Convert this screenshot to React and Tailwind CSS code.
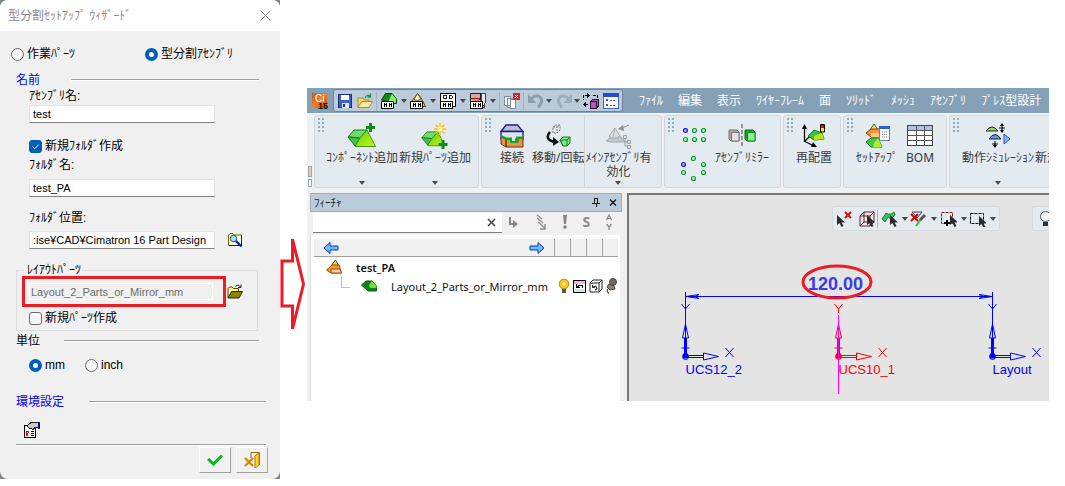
import React from "react";

const JP = "font-['Liberation_Sans','Noto_Sans_CJK_JP',sans-serif]";
const UI = "font-['Noto_Sans','Noto_Sans_CJK_JP',sans-serif]";

function Icon({ w = 16, h = 16, crisp = false, className = "", children }) {
  return (
    <svg
      width={w}
      height={h}
      viewBox={`0 0 ${w} ${h}`}
      shapeRendering={crisp ? "crispEdges" : "auto"}
      fill="none"
      aria-hidden="true"
      className={`shrink-0 ${className}`}
    >
      {children}
    </svg>
  );
}

const Caret = ({ className = "" }) => (
  <Icon w={6} h={4} className={className}>
    <path d="M0 0H6L3 4Z" fill="#4a4a4a" />
  </Icon>
);

/* ---------- Wizard dialog ---------- */

const radioClass =
  "m-0 size-[13px] shrink-0 appearance-none rounded-full border border-[#6b6b6b] bg-[#f6f6f6] checked:border-4 checked:border-[#005fb8] checked:bg-white";

function Radio({ name, label, checked, className = "" }) {
  return (
    <label className={`flex items-center gap-[3px] whitespace-nowrap ${className}`}>
      <input type="radio" name={name} defaultChecked={checked} className={radioClass} />
      {label}
    </label>
  );
}

function Check({ label, checked }) {
  return (
    <label className="flex h-4 items-center gap-[3px] whitespace-nowrap">
      <span className="grid">
        <input
          type="checkbox"
          defaultChecked={checked}
          className="m-0 size-[13px] appearance-none rounded-[3px] border border-[#6b6b6b] bg-[#f6f6f6] [grid-area:1/1] checked:border-[#005fb8] checked:bg-[#005fb8]"
        />
        {checked && (
          <Icon w={13} h={13} className="pointer-events-none [grid-area:1/1]">
            <path d="M3.5 6.5L5.7 8.7L9.7 4.7" stroke="#fff" strokeWidth="1" />
          </Icon>
        )}
      </span>
      {label}
    </label>
  );
}

function Section({ title, gap, blue, className = "" }) {
  return (
    <div className={`flex h-4 items-center ${gap} ${className}`}>
      <h2 className={blue ? "text-[#0000ff]" : ""}>{title}</h2>
      <span className="h-[2px] flex-1 border-t border-b border-t-[#a0a0a0] border-b-white" />
    </div>
  );
}

const fieldClass =
  "h-[18px] w-[186px] min-w-0 border border-[#e3e3e3] border-b-[#808080] bg-white px-[3px] text-[11px] text-black outline-none";

function Wizard() {
  return (
    <div className="w-[280px] shrink-0 bg-[#86848c]">
      <form className={`rounded-lg bg-[#f0f0f0] text-xs leading-4 text-black ${JP}`}>
        <header className="flex h-[31px] items-center justify-between rounded-t-lg bg-white pr-[9px] pl-2 text-[#8a8a8a]">
          <h1>型分割ｾｯﾄｱｯﾌﾟ ｳｨｻﾞｰﾄﾞ</h1>
          <button type="button" aria-label="閉じる">
            <Icon w={11} h={11}>
              <path d="M.5 .5L10.5 10.5M10.5 .5L.5 10.5" stroke="#808080" />
            </Icon>
          </button>
        </header>

        <div className="flex flex-col pt-[15px] pr-[14px] pb-1.5 pl-4">
          <div className="-ml-[5px] flex h-4">
            <Radio name="mode" label="作業ﾊﾟｰﾂ" className="w-[134px]" />
            <Radio name="mode" label="型分割ｱｾﾝﾌﾞﾘ" checked />
          </div>

          <Section title="名前" gap="gap-[31px]" blue className="mt-[10px] pr-[7px]" />
          <div className="flex flex-col pl-[13px]">
            <label htmlFor="asm">ｱｾﾝﾌﾞﾘ名:</label>
            <input id="asm" defaultValue="test" className={`mt-px ${fieldClass}`} />
            <div className="mt-[15px]">
              <Check label="新規ﾌｫﾙﾀﾞ作成" checked />
            </div>
            <label htmlFor="folder" className="mt-[3px]">ﾌｫﾙﾀﾞ名:</label>
            <input id="folder" defaultValue="test_PA" className={`mt-1.5 ${fieldClass}`} />
            <label htmlFor="path" className="mt-[13px]">ﾌｫﾙﾀﾞ位置:</label>
            <div className="mt-[5px] flex items-center gap-3">
              <input id="path" defaultValue=":ise¥CAD¥Cimatron 16 Part Design" className={fieldClass} />
              <button type="button" aria-label="参照">
                <Icon>
                  <path d="M1.5 13.5V3L3 1.5H6L7.5 3H14.5V13.5Z" fill="#fffbe0" stroke="#6b6500" />
                  <path d="M14.5 3V13.5H2" stroke="#222" />
                  <circle cx="6.5" cy="6.5" r="3.2" fill="#8fe8ee" stroke="#444" />
                  <path d="M9 9L14.5 14.5" stroke="#0026a8" strokeWidth="2.4" />
                </Icon>
              </button>
            </div>
          </div>

          <fieldset className="mt-[13px] mr-2 border border-[#dcdcdc] px-3 pb-1">
            <legend className="-ml-1 h-4 px-0.5">ﾚｲｱｳﾄﾊﾟｰﾂ</legend>
            <div className="mt-[5px] flex h-[17px] items-center justify-between">
              <div className="relative flex">
                <input
                  aria-label="ﾚｲｱｳﾄﾊﾟｰﾂ"
                  disabled
                  defaultValue="Layout_2_Parts_or_Mirror_mm"
                  className="h-[17px] w-[184px] border border-white bg-[#f0f0f0] px-px text-[11px] text-[#6d6d6d]"
                />
                <span className="pointer-events-none absolute -top-[7px] -right-[13px] -bottom-[7px] -left-[7px] border-3 border-[#ed1c24]" />
              </div>
              <button type="button" aria-label="開く" className="mr-0.5">
                <Icon>
                  <path d="M1 13.5V4.5L2.5 3H5L6.5 4.5H11.5V7.5" fill="#fff68a" stroke="#4b4600" />
                  <path d="M1 14L4.5 7.5H15.5L12 14Z" fill="#8a8300" stroke="#2c2900" />
                  <path d="M8.5 2.5Q11 -.5 13.5 3M14 .5V3.5H11" stroke="#222" />
                </Icon>
              </button>
            </div>
            <div className="mt-[10px]">
              <Check label="新規ﾊﾟｰﾂ作成" />
            </div>
          </fieldset>

          <Section title="単位" gap="gap-6" className="mt-0.5 pr-[7px]" />
          <div className="mt-2 flex h-4 pl-[13px]">
            <Radio name="unit" label="mm" checked className="w-14" />
            <Radio name="unit" label="inch" />
          </div>

          <Section title="環境設定" gap="gap-[25px]" blue className="mt-[21px]" />
          <button type="button" aria-label="環境設定" className="mt-3 ml-2 w-4">
            <Icon crisp>
              <path d="M.5 3.5H11.5V15.5H.5Z" fill="#fff" stroke="#000" />
              <path d="M3 4L7 .5H14V5.500H11L9 7.500L5 6Z" fill="#c8c8c8" stroke="#222" />
              <path d="M14 0H16V7H14Z" fill="#000080" />
              <path d="M2 9H5V11H4V14H2Z" fill="#e00000" />
              <path d="M3 10H4V11H3Z" fill="#fff" />
              <path d="M7 9.500H10M7 11.500H10M7 13.500H10" stroke="#000" />
            </Icon>
          </button>
          <hr className="mt-[6px] h-[2px] border-t border-b border-t-[#a0a0a0] border-b-white" />
          <div className="mt-px mr-[-2px] flex justify-end gap-[5px]">
            <button
              type="submit"
              aria-label="OK"
              className="flex h-[26px] w-8 items-center justify-center border border-white border-r-[#a0a0a0] border-b-[#a0a0a0]"
            >
              <Icon w={16} h={12}>
                <path d="M1 5L6.500 10L15 1.500" stroke="#08b814" strokeWidth="3" />
              </Icon>
            </button>
            <button
              type="button"
              aria-label="終了"
              className="flex h-[26px] w-8 items-center justify-center border border-white border-r-[#a0a0a0] border-b-[#a0a0a0]"
            >
              <Icon>
                <path d="M7 6V.5H15.5V13" stroke="#a86500" />
                <path d="M15 1V13L11 16V4Z" fill="#ffd426" stroke="#b87800" />
                <path d="M1 6L9 14M9 6L1 14" stroke="#d88a00" strokeWidth="2.4" />
              </Icon>
            </button>
          </div>
        </div>
      </form>
    </div>
  );
}

/* ---------- Quick access toolbar ---------- */

const Plate = () => (
  <>
    <path d="M.5 8.5H12.5V15.5H.5Z" fill="#fff" stroke="#000" />
    <path d="M3.5 10V14M5.5 10V14M4 11.5H5M8.5 10V14M10.5 10V14M9 11.5H10" stroke="#000" />
  </>
);

function QuickBar() {
  const Sep = () => <span className="h-[18px] w-px bg-[#a4b3c1]" />;
  return (
    <div className="flex h-[23px] w-[290px] shrink-0 items-center justify-between rounded-[3px] border border-[#6e8496] bg-[#bccbd9] px-[3px]">
      <button type="button" aria-label="保存">
        <Icon crisp>
          <path d="M1.5 1.5H14.5V14.5H1.5Z" fill="#3f62c9" stroke="#1c2f86" />
          <path d="M4 2H12V7H4Z" fill="#fff" />
          <path d="M5 10H12V15H5Z" fill="#dfe6f5" />
          <path d="M6 11H8V14H6Z" fill="#1c2f86" />
        </Icon>
      </button>
      <button type="button" aria-label="開く">
        <Icon>
          <path d="M1 14V5H6L7 7H12V9" fill="#f8d878" stroke="#b88820" />
          <path d="M1 14.5L4.5 8.5H15.5L12 14.5Z" fill="#fdeaa0" stroke="#b88820" />
          <path d="M8 5Q10 1 13.5 3M13.5 .5V4H10.5" stroke="#1f9b2d" strokeWidth="1.3" />
        </Icon>
      </button>
      <Sep />
      <button type="button" aria-label="アセンブリ" className="flex items-center gap-1">
        <Icon>
          <path d="M.5 7L4.5 .5H11L15.5 6V10.500H9Z" fill="#0d8a1a" stroke="#05400a" />
          <path d="M8 7L11 1L15 6V10H8Z" fill="#8af05e" />
          <Plate />
        </Icon>
        <Caret />
      </button>
      <button type="button" aria-label="パーツ" className="flex items-center gap-1">
        <Icon>
          <path d="M.5 10L7.500 .5L11 5L15.500 13.500H10Z" fill="#ffb84c" stroke="#7a3c00" />
          <path d="M7.500 .5L11 6L7 8L4 6Z" fill="#f6f4a8" stroke="#555" />
          <Plate />
        </Icon>
        <Caret />
      </button>
      <button type="button" aria-label="図面" className="flex items-center gap-1">
        <Icon crisp>
          <path d="M.5 .5H15.5V13.5H.5Z" fill="#fff" stroke="#000" />
          <path d="M3.500 2.500H6.500V5.500H3.500ZM9.500 2.500H11.500L12.500 4L11.500 5.500H9.500Z" stroke="#222" />
          <Plate />
        </Icon>
        <Caret />
      </button>
      <button type="button" aria-label="加工" className="flex items-center gap-1">
        <Icon crisp>
          <path d="M.5 .5H10.500V9H.5Z" fill="#d8a49c" stroke="#222" />
          <path d="M1 5H9L14 12V14H10" fill="#e88" stroke="#8d1e14" />
          <path d="M11.500 .5H15.500V9L14 12H11.500Z" fill="#e9eef2" stroke="#444" />
          <Plate />
        </Icon>
        <Caret />
      </button>
      <Sep />
      <button type="button" aria-label="閉じる">
        <Icon crisp>
          <path d="M.5 3.5H6.5V12.5H.5ZM3.5 5.5H9.5V14.5H3.5Z" fill="#eef3f8" stroke="#7f8fa0" />
          <path d="M6 6H12V16H6Z" fill="#fff" />
          <path d="M6.5 6.5H11.5V15.5H6.5Z" stroke="#7f8fa0" />
          <path d="M9 0H16V7H9Z" fill="#ee1c1c" />
          <path d="M11 2L14 5M14 2L11 5" stroke="#fff" />
        </Icon>
      </button>
      <Sep />
      <button type="button" aria-label="元に戻す" className="flex items-center gap-0.5">
        <Icon>
          <path d="M3.500 5.500Q8 1 12 4Q16 8.500 10 14.500" stroke="#8e9cab" strokeWidth="3" />
          <path d="M0 1V10H8.500Z" fill="#8e9cab" />
        </Icon>
        <Caret />
      </button>
      <button type="button" aria-label="やり直し" className="flex items-center gap-0.5">
        <Icon>
          <path d="M12.500 5.500Q8 1 4 4Q0 8.500 6 14.500" stroke="#a0adba" strokeWidth="3" />
          <path d="M16 1V10H7.500Z" fill="#a0adba" />
        </Icon>
        <Caret />
      </button>
      <button type="button" aria-label="切替">
        <Icon crisp>
          <path d="M5 2.500H.5V7M2 11.500H6M10 2.500H14.500V5" stroke="#000" strokeDasharray="3 1" />
          <path d="M4 0V5L7 2.500ZM3 9V14L0 11.500Z" fill="#000" />
          <path d="M7.500 8.500L9.500 6.500H15.500V13L13.500 15.500H7.500Z" fill="#a861b0" stroke="#2f0a35" />
          <path d="M8 8.500H13.500V15" stroke="#2f0a35" />
        </Icon>
      </button>
      <button type="button" aria-label="一覧">
        <Icon crisp>
          <path d="M.5 .5H15.5V15.5H.5Z" fill="#fff" stroke="#4a6cb8" />
          <path d="M0 0H16V4H0Z" fill="#2448d8" />
          <path d="M3 6H5V8H3ZM3 11H5V13H3Z" fill="#3458d8" />
          <path d="M7 7.500H13M7 12.500H13" stroke="#555" strokeDasharray="2 1" />
        </Icon>
      </button>
    </div>
  );
}

const MENUS = ["ﾌｧｲﾙ", "編集", "表示", "ﾜｲﾔｰﾌﾚｰﾑ", "面", "ｿﾘｯﾄﾞ", "ﾒｯｼｭ", "ｱｾﾝﾌﾞﾘ", "ﾌﾟﾚｽ型設計"];

function MenuBar() {
  return (
    <div className="flex h-[25px] items-center overflow-hidden bg-[#85a1b7]">
      <span className="ml-[5px] flex h-4 w-[21px] shrink-0">
        <svg width="18" height="18" viewBox="0 0 18 18" aria-hidden="true">
          <defs>
            <linearGradient id="logo" x1="0" y1="0" x2="1" y2="1">
              <stop offset="0" stopColor="#c9591e" />
              <stop offset=".5" stopColor="#f08024" />
              <stop offset="1" stopColor="#b5410f" />
            </linearGradient>
          </defs>
          <path d="M0 0H15V15H0Z" fill="url(#logo)" />
          <text x="3" y="9" fontSize="10" fill="#fff" fontFamily="Liberation Sans, sans-serif">Ci</text>
          <text x="6" y="16" fontSize="9" fontWeight="700" fill="#111" fontFamily="Liberation Sans, sans-serif">15</text>
        </svg>
      </span>
      <QuickBar />
      <nav className="ml-4 flex shrink-0 gap-[15px] text-xs leading-4 text-white">
        {MENUS.map((m) => (
          <button key={m} type="button" className="shrink-0 whitespace-nowrap">{m}</button>
        ))}
      </nav>
    </div>
  );
}

/* ---------- Ribbon ---------- */

const Grip = () => (
  <Icon w={8} h={16} crisp className="mt-[2px] ml-[2px]">
    {[0, 4, 8, 12].map((y) => (
      <path key={y} d={`M1 ${y}h2v2h-2zM5 ${y}h2v2h-2z`} fill="#8eabbf" />
    ))}
  </Icon>
);

function Group({ className = "", children }) {
  return (
    <div className={`flex h-[73px] rounded-[3px] border border-[#d2d6da] bg-[#e3eaf0] ${className}`}>
      <Grip />
      {children}
    </div>
  );
}

function Tool({ label, icon, caret, className = "" }) {
  return (
    <button type="button" className={`flex shrink-0 flex-col items-center whitespace-nowrap ${className}`}>
      <span className="mt-1 flex h-[31px] items-center justify-center">{icon}</span>
      {[].concat(label).map((line) => (
        <span key={line} className="block text-xs leading-[14px] text-[#3a3a3a]">{line}</span>
      ))}
      {caret && <Caret className="mt-auto mb-[2px]" />}
    </button>
  );
}

const Block = () => (
  <>
    <path d="M1 14L7 7H20L13 15Z" fill="#6fdc6a" stroke="#167a1c" />
    <path d="M1 14L13 15L8 23Z" fill="#46bd4e" stroke="#167a1c" />
    <path d="M13 15L20 7L28.500 23.500H8Z" fill="url(#lime)" stroke="#3f9416" />
  </>
);

const AddPart = (
  <Icon w={30} h={26}>
    <defs>
      <linearGradient id="lime" x1="0" y1="0" x2="1" y2="1">
        <stop offset="0" stopColor="#5cc81e" />
        <stop offset="1" stopColor="#c9fa10" />
      </linearGradient>
    </defs>
    <Block />
    <path d="M23.500 0V9M19 4.500H28" stroke="#128a1c" strokeWidth="3" />
  </Icon>
);
const NewPart = (
  <Icon w={30} h={26}>
    <g transform="translate(1 3) scale(.84)"><Block /></g>
    <path d="M20 0V12M14 6H26M15.500 1.500L24.500 10.500M24.500 1.500L15.500 10.500" stroke="#f5c400" strokeWidth="1.4" />
    <circle cx="20" cy="6" r="2.500" fill="#fff79a" />
    <path d="M23 17V26M18.500 21.500H27.500" stroke="#128a1c" strokeWidth="3" />
  </Icon>
);
const Connect = (
  <Icon w={24} h={24}>
    <path d="M1 7.500L6 1H17.500L23 7.500Z" fill="#b9bfcc" stroke="#1b1b98" strokeWidth="1.300" />
    <path d="M1 7.500H23V15H16V19H9V15H1Z" fill="#dfe5f0" stroke="#1b1b98" strokeWidth="1.300" />
    <path d="M1 13V20L6 23V15ZM6 15V23H23V14H18V18H11V15Z" fill="#e8924a" stroke="#68340c" />
    <path d="M1 12L6 14.500H11V18H17V13.500H23" stroke="#05b020" strokeWidth="2" />
  </Icon>
);
const Move = (
  <Icon w={26} h={24}>
    <path d="M8 3L11 1H15V6L12 9H8ZM8 3H12V9M12 3L15 1" stroke="#777" strokeDasharray="2 1" />
    <path d="M5 8Q-1 15 9 18" stroke="#111" strokeWidth="2.600" />
    <path d="M8 13V22L14 18Z" fill="#111" />
    <path d="M15 16L18 13H25V19L22 22H18Z" fill="#7bec84" stroke="#177b25" />
    <path d="M15 16H22V22M22 16L25 13M15 16L18 22" stroke="#177b25" />
  </Icon>
);
const MainAsm = (
  <Icon w={26} h={26}>
    <path d="M1 18L6 14H16L20 19H6Z" fill="#c4c8cc" stroke="#a3a8ad" />
    <path d="M4 13L10 5L15 13L12 15H6Z" fill="#dadde0" stroke="#a3a8ad" />
    <path d="M10 5L8 14" stroke="#aeb3b8" />
    <path d="M24 2L17 5" stroke="#8b9095" />
    <path d="M18 2L13 6L19 8Z" fill="#8b9095" />
    <path d="M20 16V23H23M20 19H23M18.500 12.500H21.500V15.500H18.500ZM22.500 17.500H25.500V20.500H22.500ZM22.500 22.500H25.500V25.500H22.500Z" stroke="#999ea3" />
  </Icon>
);
const Mirror = (
  <Icon w={28} h={24}>
    <path d="M1 6H9L11 8V17H3L1 15Z" fill="#aaa6aa" stroke="#77727a" />
    <path d="M3.500 8.500H11V17H3.500Z" fill="#e3dfe4" stroke="#77727a" />
    <path d="M14 0V24" stroke="#444" strokeDasharray="4 2" />
    <path d="M17 6H25L27 8V17H19L17 15Z" fill="#18a32a" stroke="#086d18" />
    <path d="M19.500 8.500H27V17H19.500Z" fill="#8cf18c" stroke="#0a8a20" />
  </Icon>
);
const Relocate = (
  <Icon w={24} h={24}>
    <path d="M2.500 17V3M2 17L12 22M3 17L8 12" stroke="#000" strokeWidth="1.300" />
    <path d="M0 5L2.500 0L5 5ZM15 23L9 23L11 18Z" fill="#000" />
    <path d="M6 12L12 6L20 9L22 15L12 16Z" fill="#3fc23f" stroke="#167a1c" />
    <path d="M12 12L20 9L22 15L12 16Z" fill="#b7e613" />
    <path d="M18.500 .5H22.500V8H18.500Z" fill="#ffe600" stroke="#000" />
    <path d="M19 1H22V4H19Z" fill="#f00000" />
  </Icon>
);
const Setup = (
  <Icon w={25} h={26}>
    <path d="M5 7L9 1L13 7Z" fill="#eef080" stroke="#4a4a10" />
    <path d="M1 10L6 6H15V14H6Z" fill="#f0943c" stroke="#8a3c00" />
    <path d="M6 10H15V14H6Z" fill="#ffc580" />
    <path d="M1 19L6 15H13L17 24H6Z" fill="#48c848" stroke="#157520" />
    <path d="M9 20L13 15L17 24H8Z" fill="#b2ee30" />
    <path d="M14.500 3.500H24.500V17.500H14.500Z" fill="#fff" stroke="#6680a8" />
    <path d="M14 3H25V6H14Z" fill="#2b5fd8" />
    <path d="M17 9H22M17 11.500H22M17 14H22" stroke="#777" strokeDasharray="1 1" />
  </Icon>
);
const Bom = (
  <Icon w={26} h={22} crisp>
    <path d="M.5 .5H25.500V20.500H.5Z" fill="#fff" stroke="#444" />
    <path d="M1 1H25V5H1Z" fill="#a9c2f2" />
    <path d="M.5 5.500H25.500M.5 10.500H25.500M.5 15.500H25.500M9.500 0V21M17.500 0V21" stroke="#555" />
  </Icon>
);
const Simulate = (
  <Icon w={26} h={26}>
    <path d="M1 8Q7 0 13 8Z" fill="#8de05e" stroke="#222" />
    <path d="M4 16Q10 7 16 16Z" fill="#5a9cf2" stroke="#222" />
    <path d="M17 1V9M14 5H20M10 18V24M7 21H13" stroke="#000" />
    <path d="M15 3L17 0L19 3M15 7L17 10L19 7M8 22L10 25L12 22" fill="#000" />
    <path d="M19 11V21L25 16Z" fill="#86b8ff" stroke="#2450d8" />
  </Icon>
);

const GRID = [[2, 2], [11, 2], [20, 2], [2, 11], [11, 11], [20, 11]];
const RING = [[10, 2], [20, 8], [20, 16], [10, 22], [0, 16], [0, 8]];

function Dots({ points, blue, h }) {
  return (
    <Icon w={26} h={h}>
      {points.map(([x, y], i) => (
        <circle
          key={i}
          cx={x + 2.5}
          cy={y + 0.5}
          r="2"
          fill={i === blue ? "#a9a9ff" : "#b5ffc0"}
          stroke={i === blue ? "#1616d0" : "#089a28"}
          strokeWidth="1.2"
        />
      ))}
    </Icon>
  );
}

function Ribbon() {
  return (
    <div className="flex h-[78px] gap-0.5 overflow-hidden bg-[#eff2f4] pt-[2px]">
      <div className="flex w-[5px] shrink-0 flex-col gap-0.5 pt-[51px] pl-px">
        <span className="h-[11px] border border-[#8eabbf] bg-[#ffc980]" />
        <span className="h-2 border border-[#8eabbf] bg-white" />
      </div>
      <Group className="w-[165px] shrink-0">
        <Tool label="ｺﾝﾎﾟｰﾈﾝﾄ追加" icon={AddPart} caret className="ml-px" />
        <Tool label="新規ﾊﾟｰﾂ追加" icon={NewPart} caret className="ml-px" />
      </Group>
      <Group className="w-[181px] shrink-0">
        <Tool label="接続" icon={Connect} className="ml-2" />
        <Tool label="移動/回転" icon={Move} className="ml-2" />
        <Tool
          label={["ﾒｲﾝｱｾﾝﾌﾞﾘ有", "効化"]}
          icon={MainAsm}
          caret
          className="border-l border-[#cdd4da]"
        />
      </Group>
      <Group className="w-[117px] shrink-0">
        <div className="ml-1.5 flex shrink-0 flex-col gap-2.5 pt-3">
          <button type="button" aria-label="格子配列" className="h-[18px]"><Dots points={GRID} blue={0} h={18} /></button>
          <button type="button" aria-label="円形配列" className="h-[26px]"><Dots points={RING} blue={5} h={26} /></button>
        </div>
        <Tool label="ｱｾﾝﾌﾞﾘﾐﾗｰ" icon={Mirror} className="ml-2" />
      </Group>
      <Group className="w-[58px] shrink-0">
        <Tool label="再配置" icon={Relocate} className="ml-0.5" />
      </Group>
      <Group className="w-[104px] shrink-0">
        <Tool label="ｾｯﾄｱｯﾌﾟ" icon={Setup} className="ml-0.5" />
        <Tool label="BOM" icon={Bom} className="ml-2" />
      </Group>
      <Group className="min-w-0 flex-1 overflow-hidden rounded-r-none border-r-0">
        <Tool label="動作ｼﾐｭﾚｰｼｮﾝ" icon={Simulate} caret className="ml-0.5" />
        <Tool label="新規" icon={null} className="ml-px" />
      </Group>
    </div>
  );
}

/* ---------- Feature tree ---------- */

const BlueArrow = ({ flip }) => (
  <Icon w={16} h={12}>
    <path
      d={flip ? "M15 6L9 .5V4H1V8H9V11.500Z" : "M1 6L7 .5V4H15V8H7V11.500Z"}
      fill="#6bb8ff"
      stroke="#0a3fa8"
    />
  </Icon>
);

function FeaturePanel() {
  return (
    <section className="flex w-[315px] shrink-0 flex-col pl-[3px]">
      <header className="flex h-[19px] items-center justify-between border border-[#9fabb6] bg-[#bccbd9] pr-1 pl-[3px] text-[11px] leading-4 text-[#222]">
        <h2>ﾌｨｰﾁｬ</h2>
        <span className="flex gap-[9px]">
          <button type="button" aria-label="固定">
            <Icon w={8} h={9} crisp>
              <path d="M2 0V5M5.500 0V5M2 .5H6M0 5.500H8M4 6V9" stroke="#111" />
            </Icon>
          </button>
          <button type="button" aria-label="閉じる">
            <Icon w={8} h={9}>
              <path d="M1 1.500L7 7.500M7 1.500L1 7.500" stroke="#111" strokeWidth="1.300" />
            </Icon>
          </button>
        </span>
      </header>
      <div className="flex h-[23px] items-start pl-[3px]">
        <span className="flex h-[21px] w-[189px] shrink-0 items-center border-b border-[#7c7c7c] bg-white pr-1.5">
          <input type="text" aria-label="検索" className="h-full min-w-0 flex-1 px-1 text-xs outline-none" />
          <button type="button" aria-label="クリア">
            <Icon w={9} h={9}>
              <path d="M1 1L8 8M8 1L1 8" stroke="#444" strokeWidth="1.500" />
            </Icon>
          </button>
        </span>
        <div className="flex flex-1 items-center justify-between self-stretch pr-[9px] pb-1 pl-1.5 text-[#8b8b8b]">
          <button type="button" aria-label="次へ">
            <Icon w={12} h={14}><path d="M2 2V9H6" stroke="#858585" strokeWidth="2" /><path d="M5 5V13L10 9Z" fill="#858585" /></Icon>
          </button>
          <button type="button" aria-label="展開">
            <Icon w={12} h={16}><path d="M2 1L7 5M2 4L8 9M3 8L10 14M10 10V15H5" stroke="#8b8b8b" strokeWidth="1.400" /></Icon>
          </button>
          <button type="button" aria-label="警告">
            <Icon w={6} h={15}><path d="M1 1H5L4 10H2Z" fill="#858585" /><circle cx="3" cy="13" r="1.800" fill="#858585" /></Icon>
          </button>
          <button type="button" className="text-sm leading-4 font-bold">S</button>
          <button type="button" aria-label="並べ替え">
            <Icon w={8} h={16}><path d="M1.500 6L4 1L6.500 6M2 4.500H6M1.500 10L4 13L6.500 10M4 13V16" stroke="#858585" strokeWidth="1.200" /></Icon>
          </button>
        </div>
      </div>
      <div className="mr-0.5 flex-1 border-l border-[#ddd] bg-white pt-1">
        <div className="mr-0.5 ml-[3px] flex h-[18px] border-b border-[#a0a0a0] bg-[#f0f0f0]">
          <div className="flex flex-1 items-center justify-between px-[9px]">
            <button type="button" aria-label="前へ"><BlueArrow /></button>
            <button type="button" aria-label="次へ"><BlueArrow flip /></button>
          </div>
          {[0, 1, 2, 3].map((i) => (
            <span key={i} className="w-4 border-l border-[#a0a0a0]" />
          ))}
        </div>
        <ul className="text-[11px] leading-[19px] text-[#111]">
          <li className="flex h-5 items-center pl-[15px]">
            <Icon w={16} h={16}>
              <path d="M5 7L9.500 1L13 7Z" fill="#d9d96b" stroke="#55551c" />
              <path d="M0.500 11L6 6H13L15.500 14H5Z" fill="#f39b41" stroke="#a04800" />
              <path d="M5 10H14L15.500 14H5Z" fill="#ffd197" stroke="#a04800" />
            </Icon>
            <strong className="ml-3.5 font-semibold">test_PA</strong>
          </li>
          <li className="flex h-[18px] items-center pr-0.5 pl-[30px]">
            <span className="mb-2 h-3 w-[9px] shrink-0 border-b border-l border-[#bbb]" />
            <Icon w={16} h={12} className="ml-[11px]">
              <path d="M.5 5L5 1H11L15.500 6V11H7Z" fill="#14801f" stroke="#075d10" />
              <path d="M8 5L11 1L15.500 6V8H9Z" fill="#75dc2c" />
            </Icon>
            <span className="ml-3.5 flex-1 whitespace-nowrap">Layout_2_Parts_or_Mirror_mm</span>
            <span className="flex items-center gap-[3px]">
              <Icon w={12} h={16}>
                <circle cx="6" cy="6" r="4.800" fill="#ffc414" stroke="#b98500" />
                <circle cx="6" cy="6" r="1.800" fill="#fff3b0" />
                <path d="M4 11H8V15H4Z" fill="#555" />
              </Icon>
              <Icon w={13} h={13} crisp>
                <path d="M.5 .5H12.500V12.500H.5Z" fill="#fff" stroke="#000" />
                <path d="M1 1H12V4H1Z" fill="#f3b0f0" />
                <path d="M1 9H12V12H1Z" fill="#bdeef5" />
                <path d="M3.500 4V7.500H7M4 7L7 5H9L10 8" stroke="#000" />
              </Icon>
              <Icon w={14} h={14}>
                <path d="M1 4L4 1H13V10L10 13H1ZM1 4H10V13M10 4L13 1" fill="#fff" stroke="#222" />
                <path d="M3.500 6V8.500H6M4 8L7 7L8 10L6 11" stroke="#222" />
              </Icon>
              <Icon w={12} h={16}>
                <circle cx="7" cy="4" r="3.500" fill="#75695f" stroke="#4a423b" />
                <path d="M3 6L8 8L9 11L4 12L1 9Z" fill="#8c7f74" stroke="#4a423b" />
                <path d="M2 11Q0 13 3 15.500" stroke="#4a423b" strokeWidth="1.200" />
              </Icon>
            </span>
          </li>
        </ul>
      </div>
    </section>
  );
}

/* ---------- Graphics view ---------- */

const Cursor = ({ x = 0, y = 0 }) => (
  <path
    transform={`translate(${x} ${y})`}
    d="M0 0V10L2.500 8L4.500 12L6.500 11L4.500 7.500H8Z"
    fill="#2b2b2b"
  />
);

function ViewTools() {
  return (
    <div className="flex justify-end gap-8 pt-[11px]">
      <div className="flex h-[25px] w-[168px] items-center justify-between rounded-[3px] border border-[#d4d9de] bg-[#e3eaf0] px-[3px]">
        <button type="button" aria-label="選択解除">
          <Icon>
            <Cursor x={1} y={4} />
            <path d="M9 1L15 7M15 1L9 7" stroke="#e00b0b" strokeWidth="2" />
          </Icon>
        </button>
        <button type="button" aria-label="ボックス" className="ml-1">
          <Icon>
            <path d="M1 5H11V15H1ZM1 5L5 1H15V11L11 15M11 5L15 1M5 1V11H15M5 11L1 15" stroke="#7d1420" />
            <Cursor x={8} y={4} />
          </Icon>
        </button>
        <span className="h-[18px] w-px bg-[#aab2ba]" />
        <button type="button" aria-label="面選択" className="flex items-center gap-1">
          <Icon w={17}>
            <path d="M1 8L5 2Q9 5 13 1L14 4Q10 9 7 6L4 11Z" fill="#35c15c" stroke="#118a35" />
            <Cursor x={9} y={4} />
          </Icon>
          <Caret />
        </button>
        <button type="button" aria-label="フィルタ" className="flex items-center gap-1">
          <Icon w={17}>
            <path d="M2 1H12L7 7Z" stroke="#444" />
            <path d="M1 3L8 10M8 3L1 10" stroke="#d00808" strokeWidth="2" />
            <path d="M6 15L12 7" stroke="#2cc23c" strokeWidth="2" />
            <path d="M10 9L15 4" stroke="#555" strokeWidth="3" />
          </Icon>
          <Caret />
        </button>
        <button type="button" aria-label="範囲追加" className="flex items-center gap-1">
          <Icon w={17}>
            <path d="M1.500 1.500H12.500V12.500H1.500Z" stroke="#8a1018" strokeDasharray="3 1" />
            <Cursor x={10} y={4} />
            <path d="M7 9V15M4 12H10" stroke="#000" strokeWidth="2" />
          </Icon>
          <Caret />
        </button>
        <button type="button" aria-label="範囲選択" className="flex items-center gap-1">
          <Icon w={17}>
            <path d="M1.500 2.500H14.500V12.500H1.500Z" stroke="#000" strokeDasharray="3 1" />
            <Cursor x={10} y={5} />
          </Icon>
          <Caret />
        </button>
      </div>
      <div className="flex h-[25px] w-[17px] items-center overflow-hidden rounded-l-[3px] border border-r-0 border-[#d4d9de] bg-[#e3eaf0] pl-1.5">
        <button type="button" aria-label="表示">
          <Icon w={14}>
            <circle cx="6.500" cy="5.500" r="5" fill="#f6f6f6" stroke="#555" />
            <path d="M4 11H9V15H4Z" fill="#333" />
          </Icon>
        </button>
      </div>
    </div>
  );
}

function Ucs({ x, color, name, center }) {
  return (
    <g transform={`translate(${x} 0)`} stroke={color}>
      <path d={center ? "M-4 42L0 47L4 42M0 47V51" : "M-4 42L0 47L4 42"} />
      <path d="M0 62L-3 76H3ZM-1 76V96M1 76V96M-4 86H4" />
      {!center && <path d="M0 30V96" />}
      <path d="M-2 92H2V96H-2Z" />
      <circle cx="0" cy="94.500" r="3" />
      <path d="M2 93.500H18M2 95.500H18M18 91L33 94.500L18 98Z" />
      <path d="M40 86L48 95M48 86L40 95" />
      <text x="0" y="112" fontSize="13" fill={color} stroke="none">{name}</text>
    </g>
  );
}

function Viewport() {
  return (
    <section className="flex min-w-0 flex-1 flex-col overflow-hidden border-t-2 border-l-2 border-[#777] bg-[#e4e4e4]">
      <ViewTools />
      <svg
        viewBox="0 0 420 148"
        width="420"
        height="148"
        fill="none"
        className="mt-[22px] font-['Liberation_Sans',sans-serif]"
        role="img"
        aria-label="120.00"
      >
        <g transform="translate(0 9)">
          <path d="M57 34.500H363" stroke="#0000ff" />
          <path d="M57 34.500L70 32.500L66 34.500L70 36.500ZM363 34.500L350 32.500L354 34.500L350 36.500Z" stroke="#0000ff" />
          <Ucs x={56.5} color="#0000ff" name="UCS12_2" />
          <Ucs x={209.500} color="#ff0000" name="UCS10_1" center />
          <Ucs x={363.500} color="#0000ff" name="Layout" />
          <path d="M209.500 53V132" stroke="#ff00ff" />
          <text x="206.500" y="28" fontSize="18" fontWeight="700" textAnchor="middle" fill="#3a3ae8">120.00</text>
          <ellipse cx="208" cy="20" rx="34" ry="16" stroke="#ed1c24" strokeWidth="3" />
        </g>
      </svg>
    </section>
  );
}

function CadWindow() {
  return (
    <main className={`mt-[88px] mr-4 flex min-w-0 flex-1 flex-col bg-[#f0f0f0] ${UI}`}>
      <MenuBar />
      <Ribbon />
      <div className="flex h-[210px] gap-[5px] pt-[2px]">
        <FeaturePanel />
        <Viewport />
      </div>
    </main>
  );
}

export default function App() {
  return (
    <div className="flex items-start bg-white">
      <Wizard />
      <Icon w={27} h={98} className="mt-[235px]">
        <path d="M2 26H12.500V4L23.500 49L12.500 94V71H2Z" fill="#fff" stroke="#ed1c24" strokeWidth="3" />
      </Icon>
      <CadWindow />
    </div>
  );
}
